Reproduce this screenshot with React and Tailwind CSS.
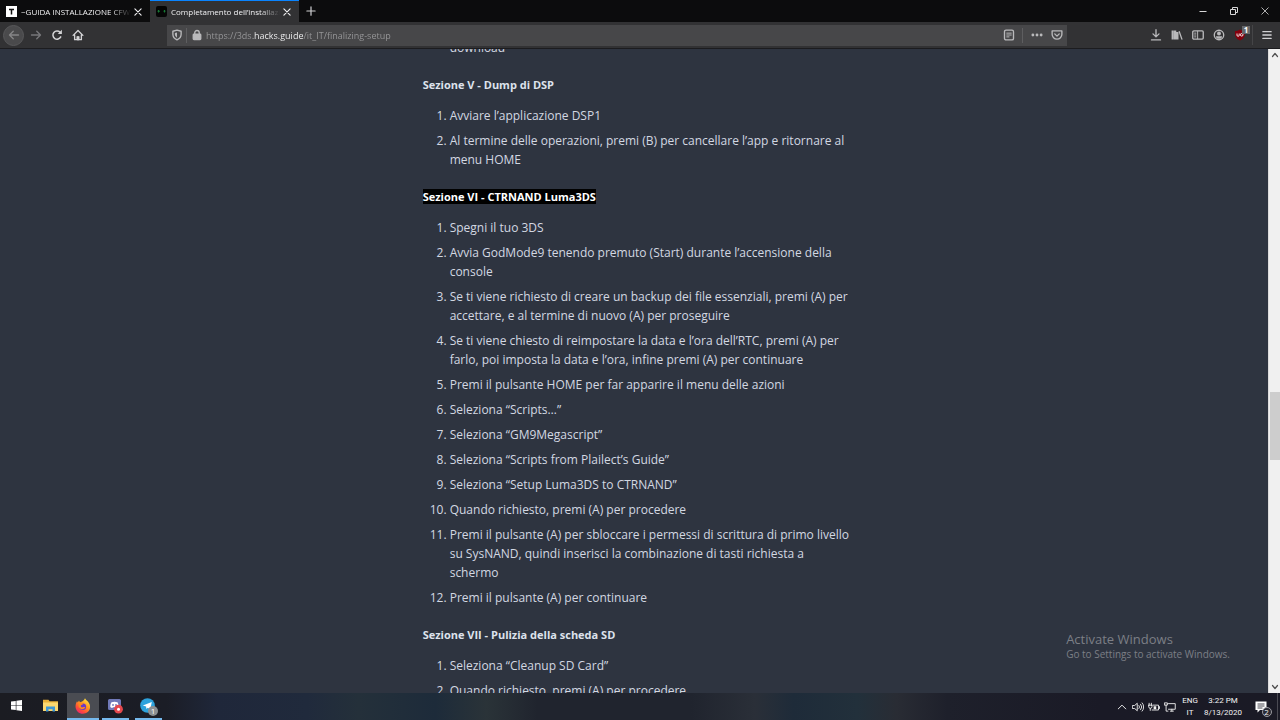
const sections = [
  {
    title: "Sezione V - Dump di DSP",
    items: [
      ["Avviare l’applicazione DSP1"],
      ["Al termine delle operazioni, premi (B) per cancellare l’app e ritornare al", "menu HOME"],
    ],
  },
  {
    title: "Sezione VI - CTRNAND Luma3DS",
    selected: true,
    items: [
      ["Spegni il tuo 3DS"],
      ["Avvia GodMode9 tenendo premuto (Start) durante l’accensione della", "console"],
      ["Se ti viene richiesto di creare un backup dei file essenziali, premi (A) per", "accettare, e al termine di nuovo (A) per proseguire"],
      ["Se ti viene chiesto di reimpostare la data e l’ora dell’RTC, premi (A) per", "farlo, poi imposta la data e l’ora, infine premi (A) per continuare"],
      ["Premi il pulsante HOME per far apparire il menu delle azioni"],
      ["Seleziona “Scripts…”"],
      ["Seleziona “GM9Megascript”"],
      ["Seleziona “Scripts from Plailect’s Guide”"],
      ["Seleziona “Setup Luma3DS to CTRNAND”"],
      ["Quando richiesto, premi (A) per procedere"],
      ["Premi il pulsante (A) per sbloccare i permessi di scrittura di primo livello", "su SysNAND, quindi inserisci la combinazione di tasti richiesta a", "schermo"],
      ["Premi il pulsante (A) per continuare"],
    ],
  },
  {
    title: "Sezione VII - Pulizia della scheda SD",
    items: [["Seleziona “Cleanup SD Card”"], ["Quando richiesto, premi (A) per procedere"]],
  },
];

function Icon({ children, className = "size-3" }) {
  return (
    <svg viewBox="0 0 16 16" className={className} fill="none" stroke="currentColor" strokeWidth="1.8" strokeLinecap="round" strokeLinejoin="round" aria-hidden="true">
      {children}
    </svg>
  );
}

function IconButton({ label, className = "w-[21px]", children }) {
  return (
    <button type="button" aria-label={label} className={`${className} relative flex h-full shrink-0 items-center justify-center`}>
      {children}
    </button>
  );
}

function Tab({ title, active, icon, width }) {
  return (
    <div className={`${width} ${active ? "border-[#0a84ff] bg-[#323234]" : "border-transparent"} flex h-full shrink-0 items-center border-t pr-[5px] pl-1.5 text-[#f0f0f2]`}>
      {icon}
      <button type="button" role="tab" aria-selected={active} className="ml-1 h-full min-w-0 flex-1 overflow-hidden text-left text-[8px] whitespace-nowrap [mask-image:linear-gradient(to_right,black_82%,transparent)]">
        {title}
      </button>
      <button type="button" aria-label="Chiudi scheda" className="flex size-3.5 shrink-0 items-center justify-center">
        <Icon className="size-2.5">
          <path d="M3 3l10 10M13 3L3 13" />
        </Icon>
      </button>
    </div>
  );
}

function TabBar() {
  return (
    <header className="flex h-[22px] shrink-0 bg-[#0c0c0d]">
      <div role="tablist" className="flex">
        <Tab
          width="w-[150px]"
          title="~GUIDA INSTALLAZIONE CFW ("
          active={false}
          icon={
            <svg viewBox="0 0 11 11" className="size-[11px] shrink-0" aria-hidden="true">
              <rect width="11" height="11" fill="#fff" />
              <path d="M3 3.5h5M5.5 3.5v5" stroke="#111" strokeWidth="1.5" />
            </svg>
          }
        />
        <Tab
          width="w-[149px]"
          title="Completamento dell’installazio"
          active
          icon={
            <svg viewBox="0 0 11 11" className="size-[11px] shrink-0" aria-hidden="true">
              <rect width="11" height="11" rx="2" fill="#050505" />
              <path d="M2.5 4v2.500M8.500 4v2.500M1.500 5.200h2.500M7.500 5.200H9.500" stroke="#167a35" />
            </svg>
          }
        />
      </div>
      <IconButton label="Nuova scheda" className="w-6 text-[#d0d0d2]">
        <Icon>
          <path d="M8 2.500v11M2.500 8h11" strokeWidth="1.6" />
        </Icon>
      </IconButton>
      <div className="ml-auto flex text-[#d8d8d8]">
        <IconButton label="Riduci a icona" className="w-[31px]">
          <svg viewBox="0 0 8 8" className="size-2" stroke="currentColor" aria-hidden="true"><path d="M.5 4.500h7" /></svg>
        </IconButton>
        <IconButton label="Ripristina" className="w-[31px]">
          <svg viewBox="0 0 8 8" className="size-2" fill="none" stroke="currentColor" aria-hidden="true"><path d="M.5 2.500h5v5h-5zM2.500 2.500v-2h5v5h-2" /></svg>
        </IconButton>
        <IconButton label="Chiudi" className="w-[31px]">
          <svg viewBox="0 0 8 8" className="size-2" stroke="currentColor" strokeWidth=".8" aria-hidden="true"><path d="M.5 .5l7 7M7.500 .5l-7 7" /></svg>
        </IconButton>
      </div>
    </header>
  );
}

function Toolbar() {
  return (
    <nav className="flex h-[27px] shrink-0 items-center border-b border-[#1c1c1f] bg-[#323234] text-[#b9b9bb]">
      <div className="flex h-full items-center pl-[3px]">
        <button type="button" aria-label="Indietro" className="mr-px flex size-[21px] items-center justify-center rounded-full border border-[#58585a] bg-[#4a4a4c] text-[#858587]">
          <Icon><path d="M14 8H2.500M7 3L2 8l5 5" /></Icon>
        </button>
        <IconButton label="Avanti" className="w-[21px] text-[#77777a]">
          <Icon><path d="M2 8h11.500M9 3l5 5-5 5" /></Icon>
        </IconButton>
        <IconButton label="Ricarica" className="w-[21px] text-[#d4d4d6]">
          <Icon><path d="M13 10.500A5.500 5.500 0 1 1 12 4.200" strokeWidth="2" /><path d="M14.500 1v5.500H9z" fill="currentColor" stroke="none" /></Icon>
        </IconButton>
        <IconButton label="Pagina iniziale" className="w-[21px] text-[#d4d4d6]">
          <Icon>
            <path d="M1.500 8.500L8 2l6.500 6.500M3.500 8v6.200h9V8" />
            <path d="M6.500 14v-4h3v4z" fill="currentColor" strokeWidth="1" />
          </Icon>
        </IconButton>
      </div>
      <div className="ml-[79px] flex h-[21px] min-w-0 flex-1 items-center bg-[#474749]">
        <IconButton label="Protezione antitracciamento" className="w-[19px]">
          <Icon>
            <path d="M8 1.500l5.500 1.500v4c0 3.500-2.200 6-5.500 7.500C4.700 13 2.500 10.500 2.500 7V3z" />
            <path d="M8 4.500v7C6 10.200 5.200 8.700 5.200 7V5.200z" fill="currentColor" stroke="none" />
          </Icon>
        </IconButton>
        <span className="h-[15px] w-px bg-[#5e5e60]" />
        <IconButton label="Informazioni sul sito" className="w-[19px]">
          <Icon>
            <path d="M5 7V5a3 3 0 0 1 6 0v2" />
            <rect x="3" y="7" width="10" height="7" rx="1" fill="currentColor" />
          </Icon>
        </IconButton>
        <input
          type="text"
          aria-label="Indirizzo"
          defaultValue="https://3ds.hacks.guide/it_IT/finalizing-setup"
          className="h-full min-w-0 flex-1 bg-[linear-gradient(to_right,#98989a_47px,#f9f9fa_47px,#f9f9fa_97px,#98989a_97px)] bg-clip-text text-[9px] text-transparent outline-none"
        />
        <IconButton label="Modalità lettura" className="w-[26px]">
          <Icon><rect x="2" y="1.500" width="12" height="13" rx="2" /><path d="M5 5.500h6M5 8h6M5 10.500h3" strokeWidth="1.300" /></Icon>
        </IconButton>
        <span className="h-[15px] w-px bg-[#5e5e60]" />
        <IconButton label="Azioni pagina" className="ml-1 w-[20px]">
          <Icon><g fill="currentColor" stroke="none"><circle cx="2.500" cy="8" r="1.900" /><circle cx="8" cy="8" r="1.900" /><circle cx="13.500" cy="8" r="1.900" /></g></Icon>
        </IconButton>
        <IconButton label="Salva in Pocket" className="w-[20px]">
          <Icon><path d="M1.500 2.500h13v4.500a6.500 6.500 0 0 1-13 0z" /><path d="M5 6.500l3 3 3-3" /></Icon>
        </IconButton>
      </div>
      <div className="ml-[78px] flex h-full items-center">
        <IconButton label="Download">
          <Icon><path d="M8 1v9M4 6.500l4 4 4-4M2 14.500h12" /></Icon>
        </IconButton>
        <IconButton label="Libreria">
          <Icon><path d="M2.300 2v12M5.500 2v12M8.500 4v10" strokeWidth="3" strokeLinecap="butt" /><path d="M11 3.500l3.500 10" /></Icon>
        </IconButton>
        <IconButton label="Barra laterale">
          <Icon><rect x="1" y="2.500" width="14" height="11" rx="1.500" /><path d="M7.500 3v10M3.500 5.500h1.700M3.500 8h1.700M3.500 10.500h1.700" strokeWidth="1.300" /></Icon>
        </IconButton>
        <IconButton label="Account">
          <Icon><circle cx="8" cy="8" r="6.300" /><circle cx="8" cy="6" r="2.600" fill="currentColor" stroke="none" /><path d="M4 9.500h8a4 3.500 0 0 1-8 0z" fill="currentColor" stroke="none" /></Icon>
        </IconButton>
        <IconButton label="uBlock Origin">
          <svg viewBox="0 0 12 12" className="size-3" fill="none" aria-hidden="true">
            <path d="M6 .5C8 1.500 9.500 2 11 2c.3 5-.8 7.500-5 9.500C1.800 9.500.7 7 1 2 2.500 2 4 1.500 6 .5z" fill="#85000d" />
            <path d="M3 4.500v1.700a1 1 0 0 0 2.200 0V4.500" stroke="#fff" strokeWidth=".9" />
            <circle cx="7.700" cy="5.800" r="1.300" stroke="#fff" strokeWidth=".9" />
          </svg>
          <span className="absolute top-1 right-0 flex h-2 w-2 items-center justify-center bg-[#66676a] text-[8px] leading-none font-bold text-white">1</span>
        </IconButton>
        <span className="ml-0.5 h-5 w-px bg-[#454547]" />
        <IconButton label="Menu" className="w-[27px] text-[#d0d0d2]">
          <Icon><path d="M2.500 3.500h11M2.500 8h11M2.500 12.500h11" /></Icon>
        </IconButton>
      </div>
    </nav>
  );
}

function Article() {
  return (
    <article className="col-start-2 text-xs leading-[19px] whitespace-nowrap text-[#d3d8e2]">
      <p className="-mt-[11px] pl-[27px]">download</p>
      {sections.map((s) => (
        <section key={s.title} className="pt-[18px]">
          <h4 className="text-[11px] leading-[19px] font-bold text-[#dde2ec]">
            <span className={s.selected ? "bg-black text-white" : ""}>{s.title}</span>
          </h4>
          <ol className="mt-3 flex list-decimal flex-col gap-1.5 pl-[27px]">
            {s.items.map((lines, i) => (
              <li key={i}>
                {lines.map((line) => (
                  <span key={line} className="block">{line}</span>
                ))}
              </li>
            ))}
          </ol>
        </section>
      ))}
    </article>
  );
}

function ScrollBar() {
  return (
    <div className="flex w-3 shrink-0 flex-col items-center border-l border-[#dcdcdc] bg-[#f0f0f0] text-[#505050]">
      <button type="button" aria-label="Scorri in alto" className="flex h-3 items-center">
        <Icon className="size-2"><path d="M3 11l5-6 5 6" strokeWidth="2.500" /></Icon>
      </button>
      <div className="flex-[333]" />
      <div className="w-2.5 flex-[68] bg-[#cdcdcd]" />
      <div className="flex-[222]" />
      <button type="button" aria-label="Scorri in basso" className="flex h-3 items-center">
        <Icon className="size-2"><path d="M3 5l5 6 5-6" strokeWidth="2.500" /></Icon>
      </button>
    </div>
  );
}

function TaskApp({ label, className = "", line = "", children }) {
  return (
    <button type="button" aria-label={label} className={`${className} flex h-full w-8 flex-col items-center justify-between`}>
      <span className="flex flex-1 items-center">{children}</span>
      <span className={`${line} h-0.5`} />
    </button>
  );
}

function TaskBar() {
  return (
    <footer className="flex h-[27px] shrink-0 items-center bg-[linear-gradient(to_right,#1b1c22_0%,#1b1d26_13%,#1f273a_17%,#202a3c_24%,#24303a_28%,#1d2b3a_34%,#2a3338_38%,#20242e_42%,#20242e_54%,#2a2f38_59%,#1e2b39_62%,#22303b_67%,#292c34_70%,#1e202b_74%,#1a1a26_86%,#1a1a25_100%)] text-[#f2f2f2]">
      <TaskApp label="Start">
        <svg viewBox="0 0 12 12" className="size-[11px]" fill="#fff" aria-hidden="true">
          <path d="M0 1.700L5.200 1v4.700H0zM5.900.9L12 0v5.700H5.900zM0 6.300h5.200V11L0 10.300zM5.900 6.300H12V12l-6.100-.9z" />
        </svg>
      </TaskApp>
      <TaskApp label="Esplora file" className="ml-0.5">
        <svg viewBox="0 0 15 13" className="h-[13px] w-[15px]" aria-hidden="true">
          <path d="M0 .8h5.500l1 1.400H15V12H0z" fill="#e9b13a" />
          <path d="M0 3.500h15V12H0z" fill="#fbd871" />
          <path d="M3 12.500V7.500h9v5H9.500v-2.300h-4v2.300z" fill="#3f97d4" />
        </svg>
      </TaskApp>
      <TaskApp label="Firefox" className="ml-px bg-[#4a4c52]" line="w-8 bg-[#76b9ed]">
        <svg viewBox="0 0 16 16" className="size-4" aria-hidden="true">
          <defs>
            <linearGradient id="flame" x1=".85" y1="0" x2=".2" y2="1">
              <stop offset="0" stopColor="#fff04a" />
              <stop offset=".4" stopColor="#ff9a1f" />
              <stop offset=".75" stopColor="#ff4a3a" />
              <stop offset="1" stopColor="#e8207a" />
            </linearGradient>
          </defs>
          <path d="M10 .3c.6 1.600 2.200 2.300 3.300 3.800 2.500 3.200 2.300 7.500-.6 10-3 2.500-7.400 2.200-10-.4C.2 11 0 7.500 1.300 4.800L2 3.200l.8 1.300 1.200-2 1 1.800c2-.6 4.200-1.600 5-4z" fill="url(#flame)" />
          <circle cx="7.800" cy="8.800" r="3.300" fill="#6a39c9" />
          <path d="M3.800 5.300c1.500-.8 3.500-.5 4.400.5-.2 1-1.700 1-2.200 1.500-.8.900.2 2.500 2 2 1-.3 1.500-.6 2.300-.1-.8 1.600-2.600 2.400-4.300 1.800C3.800 10.200 3 7.500 3.800 5.300z" fill="#ff8a1c" />
        </svg>
      </TaskApp>
      <TaskApp label="Discord" line="w-[27px] bg-[#76b9ed]">
        <svg viewBox="0 0 16 16" className="size-4" aria-hidden="true">
          <path d="M2.500 1h10A1.500 1.500 0 0 1 14 2.500V14l-2.500-2h-9A1.500 1.500 0 0 1 1 10.500v-8A1.500 1.500 0 0 1 2.500 1z" fill="#7079b8" />
          <path d="M3.300 9c0-2 .5-3.700 1.200-4.700 2-.9 4-.9 6 0 .7 1 1.200 2.700 1.200 4.700-.7.700-1.300.9-2 1l-.6-.8H5.900l-.6.8c-.7-.1-1.300-.300-2-1z" fill="#fff" />
          <circle cx="6" cy="7" r=".9" fill="#7079b8" />
          <circle cx="9" cy="7" r=".9" fill="#7079b8" />
          <circle cx="11.500" cy="11.200" r="4.400" fill="#e5484d" />
          <circle cx="11.500" cy="11.200" r="1.500" fill="#fff" />
        </svg>
      </TaskApp>
      <TaskApp label="Telegram" className="ml-px" line="w-[27px] bg-[#76b9ed]">
        <span className="relative flex size-4">
          <svg viewBox="0 0 16 16" className="size-4" aria-hidden="true">
            <circle cx="7.500" cy="7.500" r="7.300" fill="#2da2dc" />
            <path d="M2.800 7.500l9-3.600-1.500 7.600-2.500-1.800-1.400 1.300-.3-2.400z" fill="#fff" />
          </svg>
          <span className="absolute -right-0.5 -bottom-0.5 flex size-2.5 items-center justify-center rounded-full bg-[#8b8f92] text-[8px] leading-none text-white">1</span>
        </span>
      </TaskApp>
      <div className="ml-auto flex h-full items-center">
        <IconButton label="Mostra icone nascoste" className="w-4"><Icon className="size-2.5"><path d="M2 11l6-6 6 6" strokeWidth="1.500" /></Icon></IconButton>
        <IconButton label="Volume" className="w-4">
          <Icon><path d="M1 6h2.500L7 3v10L3.500 10H1zM9.300 6a3 3 0 0 1 0 4M11.500 4.300a5.500 5.500 0 0 1 0 7.400M13.500 2.500a8 8 0 0 1 0 11" strokeWidth="1.200" /></Icon>
        </IconButton>
        <IconButton label="Batteria" className="w-4">
          <Icon><path d="M1.500 3v3M4.500 3v3M.8 5.500h4.500v2a2.200 2.200 0 0 1-4.500 0zM3 10v2.500" strokeWidth="1.200" /><path d="M6.500 5.500h7.500v6.500H5.500" strokeWidth="1.200" /><path d="M7.500 7h3.500v4H7.500z" fill="currentColor" stroke="none" /><path d="M15.300 7.500v2.500" strokeWidth="1.200" /></Icon>
        </IconButton>
        <IconButton label="Rete" className="w-4">
          <Icon><path d="M6 3.500h9v7.500H6M8.500 13.500h4M10.500 11v2.500M1 2.500h3.500v3H1zM2.800 5.500V13.500h2.500" strokeWidth="1.200" /></Icon>
        </IconButton>
        <button type="button" className="flex w-6 flex-col items-center font-['Roboto','Open_Sans',sans-serif] text-[8px] leading-3"><span>ENG</span><span>IT</span></button>
        <button type="button" className="flex w-[42px] flex-col items-center font-['Roboto','Open_Sans',sans-serif] text-[8px] leading-3 whitespace-nowrap"><span>3:22 PM</span><span>8/13/2020</span></button>
        <IconButton label="Centro notifiche" className="mr-0.5 w-[34px] border-r border-[#4a4a52]">
          <span className="relative flex size-3">
            <svg viewBox="0 0 12 12" className="size-3" aria-hidden="true">
              <path d="M.5 .5h11v8.500H5L2.500 11.500V9h-2z" fill="#fff" />
              <path d="M2.500 3h7M2.500 5h7M2.500 7h5" stroke="#1a1a25" strokeWidth=".8" />
            </svg>
            <span className="absolute -right-[5px] -bottom-1 flex size-2.5 items-center justify-center rounded-full border border-[#9a9aa0] bg-[#2a2a33] text-[8px] leading-none">2</span>
          </span>
        </IconButton>
      </div>
    </footer>
  );
}

export default function App() {
  return (
    <div className="flex h-screen flex-col overflow-hidden bg-[#2e3440] font-['Open_Sans','Noto_Sans',sans-serif]">
      <TabBar />
      <Toolbar />
      <div className="relative flex min-h-0 flex-1">
        <main className="grid min-w-0 flex-1 grid-cols-3 overflow-hidden">
          <Article />
        </main>
        <ScrollBar />
        <aside className="absolute right-[50px] bottom-8 text-[#7c7f86]">
          <p className="text-[13px] leading-4">Activate Windows</p>
          <p className="text-[10px] leading-3.5">Go to Settings to activate Windows.</p>
        </aside>
      </div>
      <TaskBar />
    </div>
  );
}
